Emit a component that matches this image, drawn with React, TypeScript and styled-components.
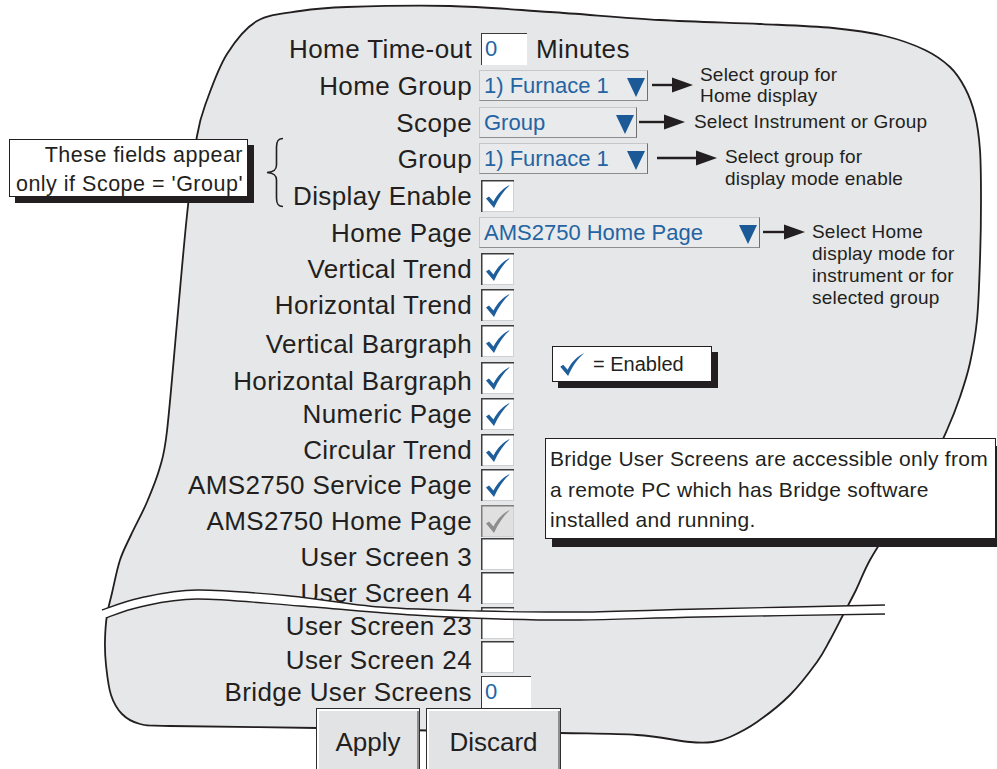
import React from 'react';
import styled, { createGlobalStyle } from 'styled-components';

const INK = '#231f20';
const BLUE = '#2464a2';
const BLUE_DARK = '#1b5a97';
const PANEL = '#e6e7e8';

const GlobalStyle = createGlobalStyle`
  html, body { margin: 0; padding: 0; background: #ffffff; }
  body { font-family: "Liberation Sans", Arial, Helvetica, sans-serif; }
`;

type Pt = [number, number];

function smoothPath(pts: Pt[], closed: boolean): string {
  const n = pts.length;
  const get = (i: number): Pt => {
    if (closed) return pts[(i + n) % n];
    return pts[Math.max(0, Math.min(n - 1, i))];
  };
  let d = `M${pts[0][0]},${pts[0][1]}`;
  const segs = closed ? n : n - 1;
  for (let i = 0; i < segs; i++) {
    const p0 = get(i - 1);
    const p1 = get(i);
    const p2 = get(i + 1);
    const p3 = get(i + 2);
    const c1x = p1[0] + (p2[0] - p0[0]) / 6;
    const c1y = p1[1] + (p2[1] - p0[1]) / 6;
    const c2x = p2[0] - (p3[0] - p1[0]) / 6;
    const c2y = p2[1] - (p3[1] - p1[1]) / 6;
    d += ` C${c1x.toFixed(1)},${c1y.toFixed(1)} ${c2x.toFixed(1)},${c2y.toFixed(1)} ${p2[0]},${p2[1]}`;
  }
  return closed ? d + ' Z' : d;
}

const BLOB: Pt[] = [
  [347, 7], [450, 6], [550, 12], [660, 20], [760, 24], [833, 28], [885, 36], [925, 50],
  [950, 67], [965, 88], [975, 115], [980, 150], [981, 200], [980, 260], [977, 320],
  [970, 363], [960, 397], [947, 430], [925, 475], [895, 520], [870, 560], [856, 590],
  [843, 615], [830, 640], [817, 662], [790, 695], [757, 722], [730, 737], [713, 742],
  [690, 742], [637, 735], [560, 733], [450, 731], [317, 728], [170, 726], [140, 724],
  [122, 714], [111, 695], [106, 665], [105, 640], [107, 615], [112, 593], [120, 560],
  [131, 535], [147, 502], [160, 467], [167, 431], [177, 323], [187, 215], [197, 136],
  [207, 100], [227, 54], [257, 21], [300, 11],
];

const BREAK_TOP: Pt[] = [
  [102, 610], [140, 598], [197, 590], [290, 596], [380, 607], [480, 611], [580, 612], [700, 609], [885, 605],
];
const BREAK_BOTTOM: Pt[] = [
  [106, 618], [140, 607], [197, 599], [300, 606], [413, 615], [500, 619], [580, 620], [700, 617], [885, 614],
];

const Canvas = styled.div`
  position: relative;
  width: 997px;
  height: 769px;
  overflow: hidden;
  background: #ffffff;
  font-family: "Liberation Sans", Arial, Helvetica, sans-serif;
  color: ${INK};
`;

const Backdrop = styled.svg`
  position: absolute;
  left: 0;
  top: 0;
  width: 997px;
  height: 769px;
  z-index: 0;
`;

const BreakLayer = styled.svg`
  position: absolute;
  left: 0;
  top: 0;
  width: 997px;
  height: 769px;
  z-index: 2;
  pointer-events: none;
`;

const Form = styled.div`
  position: relative;
  z-index: 1;
  display: flex;
  flex-direction: column;
  padding-top: 33px;
`;

const Row = styled.div<{ $pitch: number }>`
  display: grid;
  grid-template-columns: 472px 1fr;
  column-gap: 8px;
  align-items: start;
  height: ${(p) => p.$pitch}px;
`;

const Label = styled.div<{ $drop: number }>`
  margin-top: ${(p) => p.$drop}px;
  text-align: right;
  font-size: 26px;
  letter-spacing: 0.4px;
  line-height: 32px;
  white-space: nowrap;
`;

const Cell = styled.div`
  display: flex;
  align-items: flex-start;
`;

const NumberBox = styled.div<{ $w: number; $h: number }>`
  box-sizing: border-box;
  width: ${(p) => p.$w}px;
  height: ${(p) => p.$h}px;
  margin-left: 1px;
  padding-left: 3px;
  background: #ffffff;
  border-top: 1.5px solid #3a3a3a;
  border-left: 1.5px solid #3a3a3a;
  color: ${BLUE};
  font-size: 22px;
  line-height: 30px;
`;

const Suffix = styled.span`
  margin-left: 9px;
  font-size: 26px;
  letter-spacing: 0.4px;
  line-height: 32px;
  white-space: nowrap;
`;

const Select = styled.div<{ $w: number }>`
  box-sizing: border-box;
  width: ${(p) => p.$w}px;
  height: 31px;
  margin-left: -1px;
  padding: 0 2px 0 4px;
  display: flex;
  align-items: center;
  justify-content: space-between;
  background: #e9eaec;
  border: 1px solid;
  border-color: #c6c7c9 #6f6f6f #8d8d8d #c6c7c9;
  color: ${BLUE};
  font-size: 22px;
  line-height: 29px;
  white-space: nowrap;
`;

const Caret = styled.span`
  width: 0;
  height: 0;
  margin-top: 4px;
  border-left: 9px solid transparent;
  border-right: 9px solid transparent;
  border-top: 19px solid ${BLUE_DARK};
`;

const Tickbox = styled.div<{ $muted?: boolean }>`
  position: relative;
  width: 33px;
  height: 32px;
  margin-left: 1px;
  background: ${(p) => (p.$muted ? '#e0e0e1' : '#ffffff')};
  box-shadow: inset 1.5px 1.5px 0 ${(p) => (p.$muted ? '#7d7d7d' : '#3d3d3d')},
    inset -1px -1px 0 #cfd0d2;
`;

const ArrowSvg = styled.svg<{ $gap: number }>`
  display: block;
  flex: none;
  margin-left: ${(p) => p.$gap}px;
`;

const Note = styled.div<{ $gap: number; $shift: number; $lh: number }>`
  margin-left: ${(p) => p.$gap}px;
  margin-top: ${(p) => p.$shift}px;
  font-size: 19px;
  letter-spacing: 0.2px;
  line-height: ${(p) => p.$lh}px;
  white-space: nowrap;
`;

const ButtonBar = styled.div`
  display: flex;
  gap: 6px;
  padding-left: 316px;
`;

const Button = styled.div<{ $w: number }>`
  box-sizing: border-box;
  width: ${(p) => p.$w}px;
  height: 68px;
  border: 1px solid #2e2e2e;
  background: #e2e3e5;
  box-shadow: inset 2px 2px 0 #ffffff, inset -2px -2px 0 #8e8e8e;
  font-size: 26px;
  line-height: 66px;
  text-align: center;
  color: ${INK};
`;

const Callout = styled.div`
  position: absolute;
  z-index: 3;
  box-sizing: border-box;
  background: #ffffff;
  border: 1.5px solid ${INK};
`;

const ScopeCallout = styled(Callout)`
  left: 9px;
  top: 139px;
  width: 239px;
  height: 58px;
  padding: 1px 4px 0 0;
  text-align: right;
  font-size: 21.5px;
  letter-spacing: 0.5px;
  line-height: 29px;
  white-space: nowrap;
  box-shadow: 6px 6px 0 ${INK};
`;

const Legend = styled(Callout)`
  left: 552px;
  top: 346px;
  width: 160px;
  height: 36px;
  display: flex;
  align-items: center;
  gap: 8px;
  padding-left: 7px;
  font-size: 20px;
  white-space: nowrap;
  box-shadow: 6px 6px 0 ${INK};
`;

const BridgeNote = styled(Callout)`
  left: 545px;
  top: 438px;
  width: 451px;
  height: 101px;
  padding: 5px 0 0 4px;
  font-size: 21px;
  letter-spacing: 0.27px;
  line-height: 30.5px;
  white-space: nowrap;
  box-shadow: 7px 8px 0 ${INK};
`;

const BraceSvg = styled.svg`
  position: absolute;
  z-index: 3;
  left: 264px;
  top: 137px;
`;

const Tick: React.FC<{ muted?: boolean; width?: number; height?: number; viewBox?: string }> = ({
  muted,
  width = 33,
  height = 32,
  viewBox = '0 0 33 32',
}) => (
  <svg width={width} height={height} viewBox={viewBox} style={{ display: 'block' }}>
    <path
      d="M5 18.5 L8 16.5 L12.5 21.5 C17 13 22 8.5 29.5 4.5 C23 10 17.5 18 13 28 Z"
      fill={muted ? '#8d8d8d' : '#1d5e9b'}
    />
  </svg>
);

const Arrow: React.FC<{ width: number; gap: number }> = ({ width, gap }) => (
  <ArrowSvg $gap={gap} width={width} height={31} viewBox={`0 0 ${width} 31`}>
    <line x1={0} y1={15} x2={width - 18} y2={15} stroke={INK} strokeWidth={2.4} />
    <polygon points={`${width - 21},7.5 ${width},15 ${width - 21},22.5`} fill={INK} />
  </ArrowSvg>
);

interface NoteSpec {
  lines: string[];
  arrowGap: number;
  arrowWidth: number;
  textGap: number;
  shift: number;
  lineHeight: number;
}

type Control =
  | { kind: 'number'; width: number; height: number; value: string; suffix?: string }
  | { kind: 'select'; width: number; value: string; note?: NoteSpec }
  | { kind: 'check'; state: 'on' | 'off' | 'muted' };

interface RowSpec {
  label: string;
  pitch: number;
  drop?: number;
  control: Control;
}

const ROWS: RowSpec[] = [
  { label: 'Home Time-out', pitch: 37, control: { kind: 'number', width: 46, height: 32, value: '0', suffix: 'Minutes' } },
  {
    label: 'Home Group',
    pitch: 37,
    control: {
      kind: 'select',
      width: 169,
      value: '1) Furnace 1',
      note: { lines: ['Select group for', 'Home display'], arrowGap: 4, arrowWidth: 41, textGap: 7, shift: -6, lineHeight: 21 },
    },
  },
  {
    label: 'Scope',
    pitch: 36,
    control: {
      kind: 'select',
      width: 158,
      value: 'Group',
      note: { lines: ['Select Instrument or Group'], arrowGap: 2, arrowWidth: 46, textGap: 9, shift: 4, lineHeight: 22 },
    },
  },
  {
    label: 'Group',
    pitch: 37,
    control: {
      kind: 'select',
      width: 169,
      value: '1) Furnace 1',
      note: { lines: ['Select group for', 'display mode enable'], arrowGap: 9, arrowWidth: 60, textGap: 8, shift: 3, lineHeight: 22 },
    },
  },
  { label: 'Display Enable', pitch: 37, control: { kind: 'check', state: 'on' } },
  {
    label: 'Home Page',
    pitch: 36,
    control: {
      kind: 'select',
      width: 281,
      value: 'AMS2750 Home Page',
      note: {
        lines: ['Select Home', 'display mode for', 'instrument or for', 'selected group'],
        arrowGap: 3,
        arrowWidth: 42,
        textGap: 7,
        shift: 4,
        lineHeight: 22,
      },
    },
  },
  { label: 'Vertical Trend', pitch: 36, control: { kind: 'check', state: 'on' } },
  { label: 'Horizontal Trend', pitch: 36, control: { kind: 'check', state: 'on' } },
  { label: 'Vertical Bargraph', pitch: 37, drop: 3, control: { kind: 'check', state: 'on' } },
  { label: 'Horizontal Bargraph', pitch: 36, drop: 3, control: { kind: 'check', state: 'on' } },
  { label: 'Numeric Page', pitch: 36, control: { kind: 'check', state: 'on' } },
  { label: 'Circular Trend', pitch: 35, control: { kind: 'check', state: 'on' } },
  { label: 'AMS2750 Service Page', pitch: 36, control: { kind: 'check', state: 'on' } },
  { label: 'AMS2750 Home Page', pitch: 33, control: { kind: 'check', state: 'muted' } },
  { label: 'User Screen 3', pitch: 34, drop: 3, control: { kind: 'check', state: 'off' } },
  { label: 'User Screen 4', pitch: 35, drop: 5, control: { kind: 'check', state: 'off' } },
  { label: 'User Screen 23', pitch: 34, drop: 3, control: { kind: 'check', state: 'off' } },
  { label: 'User Screen 24', pitch: 35, drop: 3, control: { kind: 'check', state: 'off' } },
  { label: 'Bridge User Screens', pitch: 32, control: { kind: 'number', width: 50, height: 33, value: '0' } },
];

const ControlView: React.FC<{ control: Control }> = ({ control }) => {
  if (control.kind === 'number') {
    return (
      <Cell>
        <NumberBox $w={control.width} $h={control.height}>
          {control.value}
        </NumberBox>
        {control.suffix && <Suffix>{control.suffix}</Suffix>}
      </Cell>
    );
  }
  if (control.kind === 'select') {
    const n = control.note;
    return (
      <Cell>
        <Select $w={control.width}>
          <span>{control.value}</span>
          <Caret />
        </Select>
        {n && (
          <>
            <Arrow width={n.arrowWidth} gap={n.arrowGap} />
            <Note $gap={n.textGap} $shift={n.shift} $lh={n.lineHeight}>
              {n.lines.map((l) => (
                <div key={l}>{l}</div>
              ))}
            </Note>
          </>
        )}
      </Cell>
    );
  }
  return (
    <Cell>
      <Tickbox $muted={control.state === 'muted'}>
        {control.state !== 'off' && <Tick muted={control.state === 'muted'} />}
      </Tickbox>
    </Cell>
  );
};

const breakFill =
  smoothPath(BREAK_TOP, false) +
  ' L' +
  smoothPath([...BREAK_BOTTOM].reverse() as Pt[], false).slice(1) +
  ' Z';

export default function App() {
  return (
    <>
      <GlobalStyle />
      <Canvas>
        <Backdrop viewBox="0 0 997 769">
          <path d={smoothPath(BLOB, true)} fill={PANEL} stroke={INK} strokeWidth={1.8} />
        </Backdrop>

        <Form>
          {ROWS.map((r) => (
            <Row key={r.label} $pitch={r.pitch}>
              <Label $drop={r.drop ?? 0}>{r.label}</Label>
              <ControlView control={r.control} />
            </Row>
          ))}
          <ButtonBar>
            <Button $w={104}>Apply</Button>
            <Button $w={135}>Discard</Button>
          </ButtonBar>
        </Form>

        <BreakLayer viewBox="0 0 997 769">
          <path d={breakFill} fill="#ffffff" stroke="none" />
          <path d={smoothPath(BREAK_TOP, false)} fill="none" stroke={INK} strokeWidth={1.4} />
          <path d={smoothPath(BREAK_BOTTOM, false)} fill="none" stroke={INK} strokeWidth={1.4} />
        </BreakLayer>

        <ScopeCallout>
          <div>These fields appear</div>
          <div>only if Scope = 'Group'</div>
        </ScopeCallout>

        <BraceSvg width={22} height={72} viewBox="0 0 22 72">
          <path
            d="M19 1.5 C14 1.5 12.5 4 12.5 10 L12.5 28 C12.5 33 10 35 3 35.5 C10 36 12.5 38 12.5 43 L12.5 61 C12.5 67 14 69.5 19 69.5"
            fill="none"
            stroke={INK}
            strokeWidth={1.6}
          />
        </BraceSvg>

        <Legend>
          <Tick width={25} height={23} viewBox="5 4.5 25 23.5" />
          <span>= Enabled</span>
        </Legend>

        <BridgeNote>
          <div>Bridge User Screens are accessible only from</div>
          <div>a remote PC which has Bridge software</div>
          <div>installed and running.</div>
        </BridgeNote>
      </Canvas>
    </>
  );
}
